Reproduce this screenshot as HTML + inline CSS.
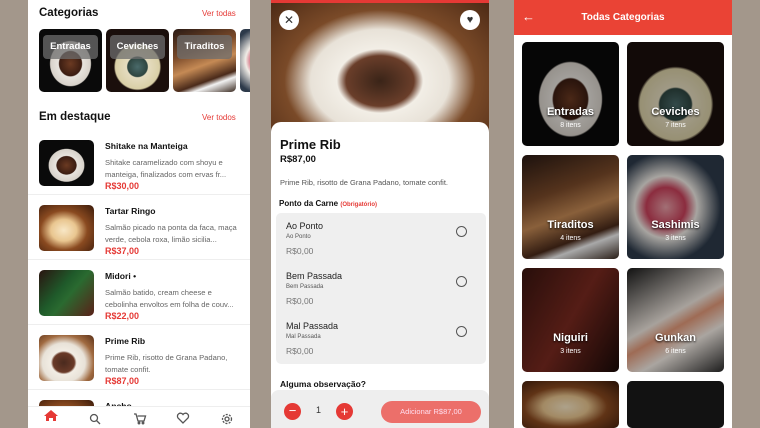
<!DOCTYPE html>
<html><head><meta charset="utf-8"><style>
*{box-sizing:border-box;margin:0;padding:0}
body{width:760px;height:428px;overflow:hidden;background:#a3978b;font-family:"Liberation Sans",sans-serif;position:relative}
.p{position:absolute;top:0;height:428px;background:#fff;overflow:hidden}
.abs{position:absolute}
.red{color:#e53935}
.img{position:absolute;border-radius:5px;overflow:hidden}
.food1{background:radial-gradient(ellipse at 50% 55%,#6b3a22 0,#3b1d12 25%,#e8e4de 27%,#d8d2ca 45%,#0a0a0a 47%)}
.food2{background:radial-gradient(circle at 50% 60%,#4a6a6a 0,#2e4540 20%,#e5dcc0 22%,#d9cfa6 45%,#1b0f0c 48%)}
.food3{background:linear-gradient(160deg,#2a1a14 0,#7a4a2a 35%,#c58a55 55%,#4a2a1a 75%,#f2f2f2 82%,#3a2a20 100%)}
.food4{background:radial-gradient(circle at 40% 50%,#e8a0a8 0,#c8405a 25%,#f0ece6 40%,#2d3a4a 70%)}
.food5{background:linear-gradient(120deg,#3a1510,#7a2a20 50%,#1a0a08)}
.food6{background:linear-gradient(150deg,#1a1a1a,#f0e8e0 45%,#e39a7a 55%,#f4ede6 70%,#2a2a2a)}
.food7{background:radial-gradient(ellipse at 45% 55%,#f8e7c6 0,#e9c690 30%,#8a4a20 55%,#3a1a0a 100%)}
.food8{background:linear-gradient(130deg,#2a1410,#1f5a2a 40%,#2a6a30 55%,#5a2018 100%)}
.food9{background:radial-gradient(ellipse at 45% 60%,#4a2a1e 0,#6a3a28 25%,#f2ede4 30%,#e8e2d8 50%,#a06a40 70%,#5a3018 100%)}
.catlbl{position:absolute;top:6px;left:4px;right:4px;height:24px;background:rgba(110,110,110,.75);border-radius:4px;color:#fff;font-size:9.5px;font-weight:bold;text-align:center;line-height:24px}
.item{position:absolute;left:0;width:222px;height:65px;border-bottom:1px solid #eee}
.item .img{left:11px;top:10px;width:55px;height:46px}
.item .t{position:absolute;left:77px;top:11px;font-size:8.6px;font-weight:bold;color:#111}
.item .d{position:absolute;left:77px;top:27px;font-size:7.6px;color:#666;line-height:12px;width:140px}
.item .pr{position:absolute;left:77px;top:51px;font-size:9px;font-weight:bold;color:#e53935}
.tile{position:absolute;width:97px;height:104px;border-radius:5px;overflow:hidden}
.tile .sh{position:absolute;inset:0;background:rgba(0,0,0,.3)}
.tile .n{position:absolute;left:0;right:0;text-align:center;color:#fff;font-size:11px;font-weight:bold;text-shadow:0 1px 2px #000}
.tile .c{position:absolute;left:0;right:0;text-align:center;color:#fff;font-size:7px}
.opt{position:absolute;left:10px;font-size:9px;color:#222}
.radio{position:absolute;left:180px;width:11px;height:11px;border:1.3px solid #555;border-radius:50%}
</style></head><body>

<!-- LEFT -->
<div class="p" style="left:28px;width:222px">
  <div class="abs" style="left:11px;top:7px;font-size:11.5px;font-weight:bold;color:#111">Categorias</div>
  <div class="abs red" style="left:174px;top:9px;font-size:8px">Ver todas</div>
  <div class="img food1" style="left:11px;top:29px;width:63px;height:63px"><div class="catlbl">Entradas</div></div>
  <div class="img food2" style="left:78px;top:29px;width:63px;height:63px"><div class="catlbl">Ceviches</div></div>
  <div class="img food3" style="left:145px;top:29px;width:63px;height:63px"><div class="catlbl">Tiraditos</div></div>
  <div class="img food4" style="left:212px;top:29px;width:63px;height:63px"></div>
  <div class="abs" style="left:11px;top:111px;font-size:11.5px;font-weight:bold;color:#111">Em destaque</div>
  <div class="abs red" style="left:174px;top:113px;font-size:8px">Ver todos</div>
  <div class="item" style="top:130px"><div class="img food1"></div><div class="t">Shitake na Manteiga</div><div class="d">Shitake caramelizado com shoyu e manteiga, finalizados com ervas fr...</div><div class="pr">R$30,00</div></div>
  <div class="item" style="top:195px"><div class="img food7"></div><div class="t">Tartar Ringo</div><div class="d">Salmão picado na ponta da faca, maça verde, cebola roxa, limão sicilia...</div><div class="pr">R$37,00</div></div>
  <div class="item" style="top:260px"><div class="img food8"></div><div class="t">Midori •</div><div class="d">Salmão batido, cream cheese e cebolinha envoltos em folha de couv...</div><div class="pr">R$22,00</div></div>
  <div class="item" style="top:325px"><div class="img food9"></div><div class="t">Prime Rib</div><div class="d">Prime Rib, risotto de Grana Padano, tomate confit.</div><div class="pr">R$87,00</div></div>
  <div class="item" style="top:390px"><div class="img food7"></div><div class="t">Ancho</div></div>
  <div class="abs" style="left:0;top:406px;width:222px;height:22px;background:#fff;border-top:1px solid #eee"></div>
  <svg class="abs" style="left:0;top:406px" width="222" height="22" viewBox="0 0 222 22">
    <path d="M18 15v-5h-2l7-6 7 6h-2v5h-3v-3h-4v3z" fill="#e53935"/>
    <g fill="none" stroke="#555" stroke-width="1.3">
      <circle cx="66" cy="12" r="3.5"/><path d="M68.5 14.5l3.5 3.5"/>
      <path d="M106 8h2l2 7h6l1.5-5h-8"/><circle cx="111" cy="17" r=".8"/><circle cx="115" cy="17" r=".8"/>
      <path d="M155 17l-5-5a2.7 2.7 0 0 1 5-3.5a2.7 2.7 0 0 1 5 3.5z"/>
      <circle cx="199" cy="13" r="2"/><circle cx="199" cy="13" r="4.5" stroke-dasharray="2 1.3"/>
    </g>
  </svg>
</div>

<!-- MIDDLE -->
<div class="p" style="left:271px;width:218px">
  <div class="abs" style="left:0;top:0;width:218px;height:135px;background:radial-gradient(ellipse at 50% 60%,#3a2418 0,#6a3e2a 22%,#f2eee6 28%,#e8e2d8 45%,#7a4a28 62%,#4a2814 100%)"></div>
  <div class="abs" style="left:0;top:0;width:218px;height:3px;background:#e53935"></div>
  <div class="abs" style="left:8px;top:10px;width:20px;height:20px;border-radius:50%;background:#fff;text-align:center;line-height:20px;font-size:12px;color:#333">✕</div>
  <div class="abs" style="left:189px;top:10px;width:20px;height:20px;border-radius:50%;background:#fff;text-align:center;line-height:21px;font-size:11px;color:#333">♥</div>
  <div class="abs" style="left:0;top:122px;width:218px;height:306px;background:#fff;border-radius:10px 10px 0 0"></div>
  <div class="abs" style="left:9px;top:137px;font-size:13px;font-weight:bold;color:#111">Prime Rib</div>
  <div class="abs" style="left:9px;top:154px;font-size:9.5px;font-weight:bold;color:#111">R$87,00</div>
  <div class="abs" style="left:9px;top:178px;font-size:7.5px;color:#555">Prime Rib, risotto de Grana Padano, tomate confit.</div>
  <div class="abs" style="left:8px;top:199px;font-size:8px;font-weight:bold;color:#111">Ponto da Carne <span class="red" style="font-size:6px">(Obrigatório)</span></div>
  <div class="abs" style="left:5px;top:213px;width:210px;height:151px;background:#efefef;border-radius:5px">
    <div class="opt" style="top:8px">Ao Ponto</div><div class="opt" style="top:21px;font-size:6px;color:#555">Ao Ponto</div><div class="opt" style="top:33px;font-size:8.5px;color:#777">R$0,00</div><div class="radio" style="top:13px"></div>
    <div class="opt" style="top:58px">Bem Passada</div><div class="opt" style="top:71px;font-size:6px;color:#555">Bem Passada</div><div class="opt" style="top:83px;font-size:8.5px;color:#777">R$0,00</div><div class="radio" style="top:63px"></div>
    <div class="opt" style="top:108px">Mal Passada</div><div class="opt" style="top:121px;font-size:6px;color:#555">Mal Passada</div><div class="opt" style="top:133px;font-size:8.5px;color:#777">R$0,00</div><div class="radio" style="top:113px"></div>
  </div>
  <div class="abs" style="left:9px;top:379px;font-size:8.5px;font-weight:bold;color:#111">Alguma observação?</div>
  <div class="abs" style="left:0;top:390px;width:218px;height:38px;background:#eee;border-radius:8px 8px 0 0"></div>
  <div class="abs" style="left:13px;top:403px;width:17px;height:17px;border-radius:50%;background:#e53935;color:#fff;text-align:center;line-height:16px;font-size:13px">−</div>
  <div class="abs" style="left:45px;top:405px;font-size:9px;color:#333">1</div>
  <div class="abs" style="left:65px;top:403px;width:17px;height:17px;border-radius:50%;background:#e53935;color:#fff;text-align:center;line-height:17px;font-size:13px">+</div>
  <div class="abs" style="left:110px;top:401px;width:100px;height:22px;border-radius:11px;background:#ec6f6a;color:#fde;text-align:center;line-height:22px;font-size:7.5px">Adicionar R$87,00</div>
</div>

<!-- RIGHT -->
<div class="p" style="left:514px;width:218px">
  <div class="abs" style="left:0;top:0;width:218px;height:35px;background:#ea4335"></div>
  <div class="abs" style="left:8px;top:9px;font-size:13px;color:#fff">←</div>
  <div class="abs" style="left:0;top:12px;width:218px;text-align:center;color:#fff;font-size:10px;font-weight:bold">Todas Categorias</div>
  <div class="tile food1" style="left:8px;top:42px"><div class="sh"></div><div class="n" style="top:64px">Entradas</div><div class="c" style="top:80px">8 itens</div></div>
  <div class="tile food2" style="left:113px;top:42px"><div class="sh"></div><div class="n" style="top:64px">Ceviches</div><div class="c" style="top:80px">7 itens</div></div>
  <div class="tile food3" style="left:8px;top:155px"><div class="sh"></div><div class="n" style="top:64px">Tiraditos</div><div class="c" style="top:80px">4 itens</div></div>
  <div class="tile food4" style="left:113px;top:155px"><div class="sh"></div><div class="n" style="top:64px">Sashimis</div><div class="c" style="top:80px">3 itens</div></div>
  <div class="tile food5" style="left:8px;top:268px"><div class="sh"></div><div class="n" style="top:64px">Niguiri</div><div class="c" style="top:80px">3 itens</div></div>
  <div class="tile food6" style="left:113px;top:268px"><div class="sh"></div><div class="n" style="top:64px">Gunkan</div><div class="c" style="top:80px">6 itens</div></div>
  <div class="tile food7" style="left:8px;top:381px;height:47px"><div class="sh"></div></div>
  <div class="tile" style="left:113px;top:381px;height:47px;background:#1a1a1a"><div class="sh"></div></div>
</div>
</body></html>
